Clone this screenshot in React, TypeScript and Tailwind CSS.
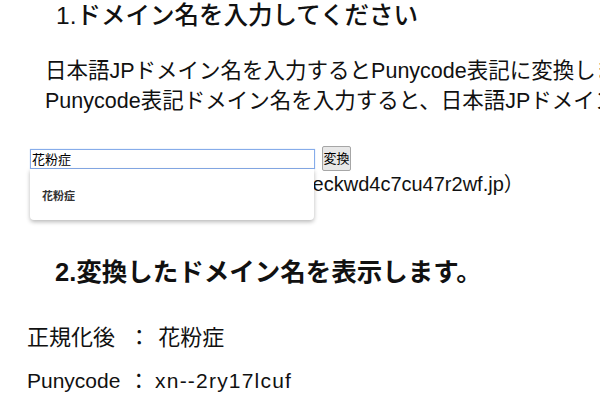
import React from "react";

export default function App() {
  const font = { fontFamily: '"Liberation Sans", "Noto Sans CJK JP", sans-serif' };
  return (
    <div className="w-[600px] h-[398px] overflow-hidden bg-white text-[#111]" style={font}>
      <h1 className="pl-[56px] pt-[1px] text-[24.5px] leading-[30px] font-medium whitespace-nowrap">
        1.ドメイン名を入力してください
      </h1>
      <div className="mt-[25px] pl-[45px] text-[21.5px] leading-[30px] whitespace-nowrap">
        <p>日本語JPドメイン名を入力するとPunycode表記に変換します。</p>
        <p>Punycode表記ドメイン名を入力すると、日本語JPドメイン名に変換します。</p>
      </div>
      <div className="mt-[30px] pl-[30px] relative">
        <div className="flex items-center gap-[7px]">
          <div className="relative">
            <input
              readOnly
              value="花粉症"
              className="block w-[285px] h-[20px] border border-[#86acea] px-[1px] text-[13px] leading-[18px] text-black outline-none shadow-[0_0_1px_#a9c6f2]"
            />
            <div className="absolute left-0 top-full z-10 w-[284px] h-[51px] bg-white rounded-b-[4px] shadow-[0_2px_4px_rgba(0,0,0,0.28)] pl-[12px] pt-[14px]">
              <span className="text-[11px] font-bold text-[#333]">花粉症</span>
            </div>
          </div>
          <button className="w-[29px] h-[25px] bg-[#e8e8e8] border border-[#a6a6a6] rounded-[2px] text-[13px] leading-[23px] text-black px-0">
            変換
          </button>
        </div>
        <p className="pl-[47px] text-[20px] leading-[24px] whitespace-nowrap mt-[1px]">
          例：ドメイン名例.jp（xn--eckwd4c7cu47r2wf.jp）
        </p>
      </div>
      <h2 className="mt-[61px] pl-[55px] text-[25.5px] leading-[30px] font-semibold whitespace-nowrap">
        2.変換したドメイン名を表示します。
      </h2>
      <div className="pl-[27px] whitespace-nowrap">
        <p className="mt-[36px] leading-[30px] text-[22px]">
          正規化後 <span className="ml-[7px] mr-[2px]">：</span> 花粉症
        </p>
        <p className="mt-[13px] leading-[30px] text-[21px]">
          Punycode <span className="ml-[2px]">：</span> <span className="tracking-[1.2px]">xn--2ry17lcuf</span>
        </p>
      </div>
    </div>
  );
}
